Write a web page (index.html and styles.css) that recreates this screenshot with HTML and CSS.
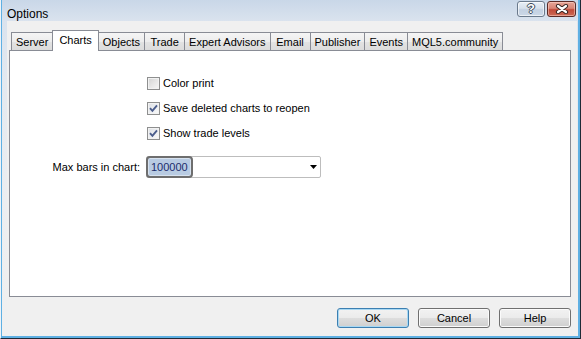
FILE: index.html
```html
<!DOCTYPE html>
<html>
<head>
<meta charset="utf-8">
<title>Options</title>
<link rel="stylesheet" href="styles.css">
</head>
<body>
<div class="window">
  <div class="titlebar">
    <span class="title">Options</span>
    <div class="caption-btns">
      <span class="cbtn help">?</span>
      <span class="cbtn close">
        <svg width="14" height="10" viewBox="0 0 14 10">
          <path d="M3 2 L11 8 M11 2 L3 8" stroke="#3a2622" stroke-width="4.2" stroke-linecap="round" fill="none"/>
          <path d="M3 2 L11 8 M11 2 L3 8" stroke="#ffffff" stroke-width="2.2" stroke-linecap="round" fill="none"/>
        </svg>
      </span>
    </div>
  </div>
  <div class="client">
    <div class="tabs">
      <div class="tab">Server</div>
      <div class="tab active">Charts</div>
      <div class="tab">Objects</div>
      <div class="tab">Trade</div>
      <div class="tab">Expert Advisors</div>
      <div class="tab">Email</div>
      <div class="tab">Publisher</div>
      <div class="tab">Events</div>
      <div class="tab">MQL5.community</div>
    </div>
    <div class="panel">
      <div class="form">
        <div class="check-row"><span class="cb"></span><span class="cb-label">Color print</span></div>
        <div class="check-row"><span class="cb checked"><svg width="11" height="11" viewBox="0 0 11 11"><path d="M2 5.2 L4.4 7.8 L9 2.4" stroke="#4b5d8c" stroke-width="1.9" fill="none"/></svg></span><span class="cb-label">Save deleted charts to reopen</span></div>
        <div class="check-row"><span class="cb checked"><svg width="11" height="11" viewBox="0 0 11 11"><path d="M2 5.2 L4.4 7.8 L9 2.4" stroke="#4b5d8c" stroke-width="1.9" fill="none"/></svg></span><span class="cb-label">Show trade levels</span></div>
        <span class="field-label">Max bars in chart:</span>
        <div class="combo">
          <span class="sel">100000</span>
          <svg class="arrow" width="7" height="4" viewBox="0 0 7 4"><polygon points="0,0 7,0 3.5,4" fill="#000"/></svg>
        </div>
      </div>
    </div>
    <div class="actions">
      <button class="btn default">OK</button>
      <button class="btn">Cancel</button>
      <button class="btn">Help</button>
    </div>
  </div>
</div>
</body>
</html>
```
FILE: styles.css
```css
html, body {
  margin: 0;
  padding: 0;
}

body {
  font-family: "Liberation Sans", Arial, sans-serif;
  font-size: 11px;
  color: #000;
  background: #f0f0f0;
}

.window {
  width: 581px;
  height: 339px;
  box-sizing: border-box;
  display: flex;
  flex-direction: column;
  border-left: 1px solid #eef3f8;
  border-right: 1px solid #1f2a36;
  border-bottom: 1px solid #1f2a36;
  background: linear-gradient(#c9d7e8 0, #dae3ee 21px, #e3e9f0 80px, #eceef1 200px, #f0f0f0 339px);
  box-shadow: inset 1px 0 0 #5fb0e3, inset -2px -2px 0 #5fb0e3;
}

.titlebar {
  height: 21px;
  display: flex;
  align-items: flex-start;
  flex: none;
}

.title {
  padding: 7px 0 0 6px;
  font-size: 12px;
  line-height: 14px;
  color: #000;
}

.caption-btns {
  margin-left: auto;
  margin-right: 4px;
  margin-top: 1px;
  display: flex;
  gap: 2px;
}

.cbtn {
  height: 16px;
  box-sizing: border-box;
  border-radius: 3px;
  display: flex;
  align-items: center;
  justify-content: center;
}

.help {
  width: 28px;
  border: 1px solid #6b7a8c;
  background: linear-gradient(#e7eef6 0, #d7e1ec 45%, #c3d1e2 55%, #ccd8e7 100%);
  box-shadow: inset 0 0 0 1px rgba(255, 255, 255, 0.6);
  color: #fff;
  font-weight: bold;
  font-size: 13px;
  line-height: 14px;
  text-shadow: -1px 0 0 #3d4858, 1px 0 0 #3d4858, 0 -1px 0 #3d4858, 0 1px 0 #3d4858;
}

.close {
  width: 29px;
  border: 1px solid #5b2a26;
  background: linear-gradient(#e6a597 0, #d98576 45%, #c14a39 55%, #cc6a55 100%);
  box-shadow: inset 0 0 0 1px rgba(255, 220, 210, 0.5);
}

.client {
  flex: 1;
  margin: 0 3px 3px 6px;
  background: #f0f0f0;
  padding: 9px 6px 0 2px;
  display: flex;
  flex-direction: column;
}

.tabs {
  display: flex;
  align-items: flex-end;
  padding-left: 2px;
  margin-bottom: -1px;
  position: relative;
  z-index: 1;
  height: 21px;
}

.tab {
  height: 18px;
  box-sizing: border-box;
  min-width: 41px;
  margin-bottom: 1px;
  margin-left: -1px;
  padding: 1px 4px 0;
  line-height: 16px;
  text-align: center;
  white-space: nowrap;
  border: 1px solid #898c95;
  border-bottom: none;
  background: linear-gradient(#f5f5f5 0, #ededed 50%, #e3e3e3 50%, #dcdcdc 100%);
}

.tab:first-child {
  margin-left: 0;
}

.tab.active {
  height: 21px;
  margin-bottom: 0;
  padding: 1px 6px 3px;
  background: #fff;
  position: relative;
  z-index: 2;
}

.panel {
  height: 247px;
  box-sizing: border-box;
  border: 1px solid #898c95;
  background: #fff;
  flex: none;
}

.form {
  display: grid;
  grid-template-columns: 131px 175px;
  column-gap: 5px;
  row-gap: 12px;
  padding-top: 26px;
}

.check-row {
  grid-column: 2;
  margin-left: 1px;
  display: flex;
  align-items: center;
  height: 13px;
  line-height: 13px;
}

.cb {
  width: 13px;
  height: 13px;
  box-sizing: border-box;
  border: 1px solid #8e8f8f;
  background: linear-gradient(135deg, #d2d2d2 0, #e6e6e6 50%, #f7f7f7 100%);
  box-shadow: inset 0 0 0 1px #f2f2f2;
  flex: none;
  display: flex;
}

.cb.checked {
  background: linear-gradient(135deg, #dcdfe4 0, #eceef1 50%, #fafafa 100%);
}

.cb-label {
  margin-left: 3px;
  white-space: nowrap;
}

.field-label {
  grid-column: 1;
  text-align: right;
  align-self: center;
  margin-top: 4px;
  padding-right: 1px;
  white-space: nowrap;
}

.combo {
  grid-column: 2;
  margin-top: 4px;
  height: 22px;
  box-sizing: border-box;
  border: 1px solid #bdbdbd;
  border-radius: 2px;
  background: #fff;
  display: flex;
  align-items: center;
}

.sel {
  width: 47px;
  height: 22px;
  box-sizing: border-box;
  margin: -1px 0 -1px -1px;
  border: 2px solid #6e6e6e;
  border-radius: 4px;
  background: #b8cbe2;
  box-shadow: inset 0 0 0 1px #d7e2ef;
  color: #1c2c6c;
  padding-left: 3px;
  line-height: 18px;
}

.arrow {
  margin-left: auto;
  margin-right: 3px;
}

.actions {
  display: flex;
  justify-content: flex-end;
  gap: 9px;
  margin-top: 11px;
}

.btn {
  width: 72px;
  height: 20px;
  box-sizing: border-box;
  border: 1px solid #707070;
  border-radius: 3px;
  font-family: "Liberation Sans", Arial, sans-serif;
  font-size: 11px;
  line-height: 18px;
  padding: 0;
  color: #000;
  background: linear-gradient(#f2f2f2 0, #ebebeb 48%, #dddddd 52%, #cfcfcf 100%);
  box-shadow: inset 0 0 0 1px #fbfbfb;
}

.btn.default {
  border-color: #3c7fb1;
  box-shadow: inset 0 0 0 1px #a8d8f3;
}
```
